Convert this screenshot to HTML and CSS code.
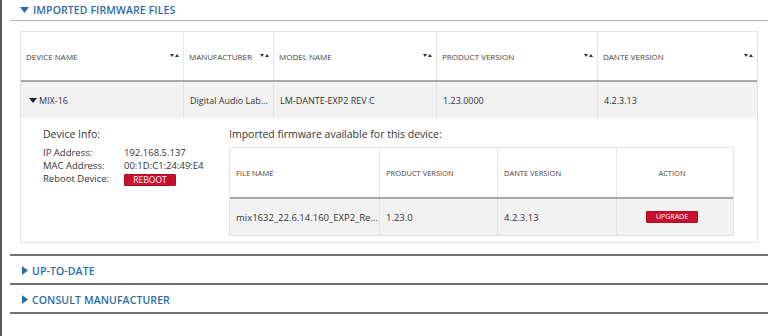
FILE: index.html
```html
<!DOCTYPE html>
<html lang="en">
<head>
  <meta charset="UTF-8" />
  <title>Firmware</title>
  <link rel="stylesheet" href="styles.css">
</head>
<body>
  <div class="page">
    <div class="section open">
      <div class="section-title">
        <svg class="caret" width="9" height="6" viewBox="0 0 9 6"><path d="M0 0h9L4.5 6z"/></svg>
        IMPORTED FIRMWARE FILES
      </div>
    </div>

    <div class="devices">
      <div class="row head">
        <div class="cell">DEVICE NAME <span class="sort"><svg width="9" height="4" viewBox="0 0 9 4"><path d="M0 0h4L2 3z M5 3h4L7 0z"/></svg></span></div>
        <div class="cell">MANUFACTURER <span class="sort"><svg width="9" height="4" viewBox="0 0 9 4"><path d="M0 0h4L2 3z M5 3h4L7 0z"/></svg></span></div>
        <div class="cell">MODEL NAME <span class="sort"><svg width="9" height="4" viewBox="0 0 9 4"><path d="M0 0h4L2 3z M5 3h4L7 0z"/></svg></span></div>
        <div class="cell">PRODUCT VERSION <span class="sort"><svg width="9" height="4" viewBox="0 0 9 4"><path d="M0 0h4L2 3z M5 3h4L7 0z"/></svg></span></div>
        <div class="cell">DANTE VERSION <span class="sort"><svg width="9" height="4" viewBox="0 0 9 4"><path d="M0 0h4L2 3z M5 3h4L7 0z"/></svg></span></div>
      </div>
      <div class="row data">
        <div class="cell"><svg class="row-caret" width="8" height="5" viewBox="0 0 8 5"><path d="M0 0h8L4 5z"/></svg>MIX-16</div>
        <div class="cell">Digital Audio Lab...</div>
        <div class="cell">LM-DANTE-EXP2 REV C</div>
        <div class="cell">1.23.0000</div>
        <div class="cell">4.2.3.13</div>
      </div>

      <div class="detail">
        <div class="device-info">
          <div class="detail-title">Device Info:</div>
          <div class="info-grid">
            <span>IP Address:</span><span>192.168.5.137</span>
            <span>MAC Address:</span><span>00:1D:C1:24:49:E4</span>
            <span>Reboot Device:</span><span><button class="btn">REBOOT</button></span>
          </div>
        </div>
        <div class="firmware">
          <div class="detail-title">Imported firmware available for this device:</div>
          <div class="fw-table">
            <div class="fw-row fw-head">
              <div class="cell">FILE NAME</div>
              <div class="cell">PRODUCT VERSION</div>
              <div class="cell">DANTE VERSION</div>
              <div class="cell center">ACTION</div>
            </div>
            <div class="fw-row fw-data">
              <div class="cell">mix1632_22.6.14.160_EXP2_Re...</div>
              <div class="cell">1.23.0</div>
              <div class="cell">4.2.3.13</div>
              <div class="cell center"><button class="btn">UPGRADE</button></div>
            </div>
          </div>
        </div>
      </div>
    </div>

    <div class="section closed">
      <div class="section-title">
        <svg class="caret" width="6" height="9" viewBox="0 0 6 9"><path d="M0 0v9L6 4.5z"/></svg>
        UP-TO-DATE
      </div>
    </div>
    <div class="section closed">
      <div class="section-title">
        <svg class="caret" width="6" height="9" viewBox="0 0 6 9"><path d="M0 0v9L6 4.5z"/></svg>
        CONSULT MANUFACTURER
      </div>
    </div>
  </div>
</body>
</html>
```

FILE: styles.css
```css
* { box-sizing: border-box; }

html, body {
  margin: 0;
  background: #fff;
}

body {
  font-family: 'Open Sans', 'Liberation Sans', sans-serif;
  color: #333;
}

.page {
  height: 336px;
  border-left: 2px solid #5a5a5a;
  padding: 0 8px;
}

.section-title {
  display: flex;
  align-items: center;
  gap: 4px;
  padding-left: 10px;
  font-size: 10.5px;
  font-weight: 600;
  color: #2c6aa8;
  letter-spacing: 0.1px;
}

.section-title .caret {
  fill: #2c6aa8;
}

.section.open .section-title {
  height: 21px;
  border-bottom: 1px solid #b8b8b8;
}

.section.closed {
  border-top: 2px solid #727272;
}

.section.closed .section-title {
  height: 27px;
  padding: 2px 0 0 12px;
}

.section.closed:last-child {
  border-bottom: 2px solid #727272;
}

/* device table */
.devices {
  margin: 10px 10px 11px;
  border: 1px solid #e2e2e2;
}

.row {
  display: grid;
  grid-template-columns: 162px 90px 163px 161px 1fr;
}

.row .cell {
  display: flex;
  align-items: center;
  border-left: 1px solid #e4e4e4;
  white-space: nowrap;
  overflow: hidden;
}

.row .cell:first-child {
  border-left: none;
}

.head {
  height: 50px;
  border-bottom: 2px solid #a9a9a9;
}

.head .cell {
  padding: 0 4px 0 5px;
  font-size: 8px;
  color: #444;
  justify-content: space-between;
}

.sort svg {
  display: block;
  fill: #333;
}

.data {
  height: 36px;
  background: #f2f2f2;
}

.data .cell {
  padding-left: 6px;
  font-size: 9px;
  color: #333;
}

.row-caret {
  fill: #222;
  margin: 0 2px 0 2px;
}

/* expanded device */
.detail {
  display: flex;
  padding: 8px 23px 6px 22px;
}

.device-info {
  width: 186px;
  flex: none;
}

.firmware {
  flex: 1;
}

.detail-title {
  font-size: 10.5px;
  color: #333;
  height: 16px;
  line-height: 16px;
  margin-bottom: 5px;
}

.info-grid {
  display: grid;
  grid-template-columns: 81px 1fr;
  font-size: 9.5px;
  margin-top: -1px;
  line-height: 13px;
}

.btn {
  font-family: inherit;
  background: #c8102e;
  color: #fff;
  border: 1px solid #b00d27;
  border-radius: 1px;
  font-size: 8px;
  padding: 0;
  height: 12px;
  width: 52px;
  line-height: 10px;
  cursor: pointer;
}

.info-grid .btn {
  margin-top: 2px;
  font-size: 8.5px;
}

.fw-table {
  border: 1px solid #e2e2e2;
}

.fw-row {
  display: grid;
  grid-template-columns: 149px 118px 119px 1fr;
}

.fw-row .cell {
  display: flex;
  align-items: center;
  padding-left: 6px;
  border-left: 1px solid #e4e4e4;
  white-space: nowrap;
  overflow: hidden;
}

.fw-row .cell:first-child {
  border-left: none;
}

.fw-row .cell.center {
  justify-content: center;
  padding-left: 0;
  padding-right: 6px;
}

.fw-head {
  height: 51px;
  border-bottom: 2px solid #a9a9a9;
}

.fw-head .cell {
  font-size: 7.5px;
  color: #444;
}

.fw-data {
  height: 36px;
  background: #f2f2f2;
}

.fw-data .cell {
  font-size: 9.5px;
}

.fw-data .btn {
  font-size: 7px;
}
```
